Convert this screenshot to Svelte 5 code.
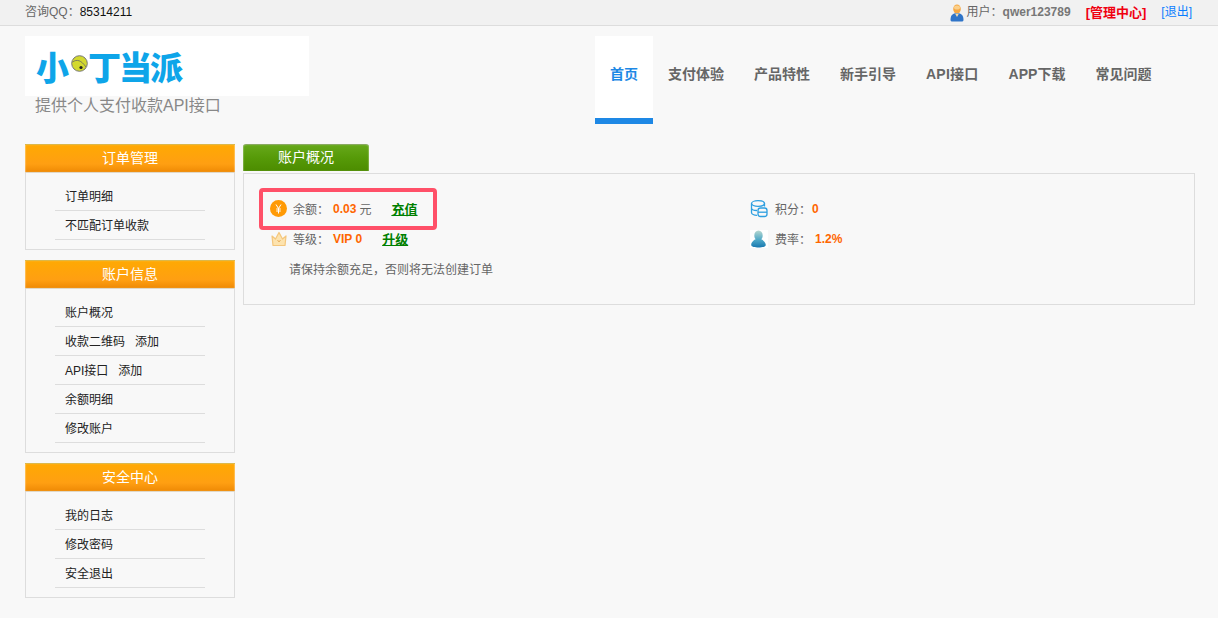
<script>
  const menus = [
    { title: '订单管理', items: [['订单明细'], ['不匹配订单收款']] },
    { title: '账户信息', items: [['账户概况'], ['收款二维码', '添加'], ['API接口', '添加'], ['余额明细'], ['修改账户']] },
    { title: '安全中心', items: [['我的日志'], ['修改密码'], ['安全退出']] }
  ];
  const nav = ['首页', '支付体验', '产品特性', '新手引导', 'API接口', 'APP下载', '常见问题'];
</script>

<div class="top">
  <div class="qq">咨询QQ：<b>85314211</b></div>
  <div class="user">
    <svg class="uicon" width="14" height="18" viewBox="0 0 14 18">
      <ellipse cx="7" cy="5" rx="3.800" ry="4.600" fill="#f5a742" />
      <ellipse cx="7" cy="3.600" rx="3" ry="2" fill="#fbd08a" />
      <path d="M0.500 16c0-5 2.500-7 6.500-7s6.500 2 6.500 7c0 1-1 1.600-2 1.600H2.500c-1 0-2-.6-2-1.600z" fill="#2f74c8" />
      <path d="M5 9.500h4L7 13z" fill="#f8dca8" />
    </svg>
    <span>用户：</span><b class="name">qwer123789</b>
    <b class="admin">[管理中心]</b>
    <span class="exit">[退出]</span>
  </div>
</div>

<header>
  <div class="brand">
    <div class="logo">
      <span class="g1">小</span>
      <svg width="17" height="17" viewBox="0 0 17 17" class="bell">
        <circle cx="8.500" cy="8.500" r="7.800" fill="#d3d92e" stroke="#777" stroke-width="1" />
        <path d="M1.500 7C6 4 10 5 15 12" fill="none" stroke="#666" stroke-width=".8" />
        <circle cx="10" cy="12.500" r="1.600" fill="#222" />
      </svg>
      <span class="g2">丁当</span><span class="g3">派</span>
    </div>
    <div class="slogan">提供个人支付收款API接口</div>
  </div>
  <nav>
    {#each nav as n, i}
      <div class="nav-item" class:active={i === 0} class:latin={i === 4}>{n}</div>
    {/each}
  </nav>
</header>

<div class="content">
  <aside>
    {#each menus as m}
      <section>
        <h3>{m.title}</h3>
        <ul>
          {#each m.items as it}
            <li>{it[0]}{#if it[1]}<span class="add">{it[1]}</span>{/if}</li>
          {/each}
        </ul>
      </section>
    {/each}
  </aside>
  <main>
    <div class="tab">账户概况</div>
    <div class="panel">
      <div class="mark"></div>
      <div class="grid">
        <div class="row">
          <svg class="ic" width="18" height="18" viewBox="0 0 18 18">
            <circle cx="8.500" cy="8.500" r="8.500" fill="#ff9a05" />
            <path d="M6 4.500l2.500 4 2.500-4M8.500 8.500v5M6.200 9h4.600M6.200 11h4.600" fill="none" stroke="#fff" stroke-width="1" />
          </svg>
          <span>余额：</span><b class="val">0.03</b><span class="unit">元</span><a href="#top" class="link">充值</a>
        </div>
        <div class="row right">
          <svg class="ic2" width="18" height="18" viewBox="0 0 18 18" fill="none" stroke="#2e9fe0" stroke-width="1.300">
            <ellipse cx="8" cy="3.500" rx="6.500" ry="2.800" />
            <path d="M1.500 3.500v9c0 1.500 2.500 2.800 5.500 2.800M14.500 3.500v3M1.500 8c0 1.500 2.500 2.500 5.500 2.500" />
            <rect x="8" y="8" width="9" height="8.500" rx="2.500" />
            <path d="M8 12.200h9" />
          </svg>
          <span>积分：</span><b class="val near">0</b>
        </div>
        <div class="row">
          <svg class="ic" width="18" height="18" viewBox="0 0 18 18">
            <path d="M2 6l3.500 3L9 2.500 12.500 9 16 6l-1 9.500H3z" fill="#fde3ae" stroke="#f4c67c" stroke-width="1.200" stroke-linejoin="round" />
            <path d="M7.500 10l1.500 2 1.500-2" fill="none" stroke="#e8b060" />
          </svg>
          <span>等级：</span><b class="val">VIP 0</b><a href="#top" class="link">升级</a>
        </div>
        <div class="row right">
          <svg class="ic2" width="18" height="18" viewBox="0 0 18 18">
            <defs><linearGradient id="u" x1="0" y1="0" x2="0" y2="1"><stop offset="0" stop-color="#b8d8d0" /><stop offset=".55" stop-color="#4fa9c8" /><stop offset="1" stop-color="#1878b0" /></linearGradient></defs>
            <rect width="18" height="18" fill="#fff" />
            <path d="M8.500 .5c2.600 0 4.200 2.200 4.200 5 0 1.800-.6 3-1.400 3.800 2 .8 4.500 3 4.500 5.700 0 1.800-3.800 2.500-7.300 2.500s-7.300-.7-7.300-2.500c0-2.700 2.500-4.900 4.500-5.700-.8-.8-1.400-2-1.400-3.800 0-2.800 1.600-5 4.200-5z" fill="url(#u)" />
          </svg>
          <span>费率：</span><b class="val">1.2%</b>
        </div>
        <div class="note">请保持余额充足，否则将无法创建订单</div>
      </div>
    </div>
  </main>
</div>

<style>
  :global(body) {
    margin: 0;
    background: #f8f8f8;
    font-family: "Liberation Sans", "Noto Sans CJK SC", sans-serif;
    font-size: 12px;
    color: #666;
  }
  .top {
    height: 25px;
    border-bottom: 1px solid #ddd;
    background: #f1f1f1;
    display: flex;
    justify-content: space-between;
    align-items: center;
    padding: 0 26px 0 25px;
    line-height: 25px;
  }
  .qq b { color: #111; font-weight: 400; }
  .user { display: flex; align-items: center; }
  .uicon { margin-right: 3px; }
  .name { color: #777; }
  .admin { color: #f00010; margin-left: 15px; font-size: 13px; }
  .exit { color: #0a7dff; margin-left: 15px; }
  header {
    display: flex;
    padding: 10px 0 0 25px;
    height: 88px;
  }
  .brand { width: 570px; }
  .logo {
    width: 284px;
    height: 60px;
    background: #fff;
    display: flex;
    align-items: center;
    padding-left: 11px;
    box-sizing: border-box;
    color: #0ea5e9;
    font-family: "Noto Sans CJK SC", sans-serif;
    font-weight: 900;
    font-size: 33px;
    line-height: 60px;
  }
  .g1 { margin-right: 2px; }
  .bell { flex: none; margin-bottom: 5px; }
  .g2 { width: 62px; letter-spacing: -2px; }
  .slogan {
    padding-left: 10px;
    font-size: 16px;
    line-height: 20px;
    color: #888;
  }
  nav { display: flex; height: 88px; }
  .nav-item {
    padding: 0 15px;
    font-size: 14px;
    font-weight: 700;
    line-height: 76px;
    height: 82px;
    color: #666;
    border-bottom: 6px solid transparent;
    white-space: nowrap;
  }
  .nav-item.latin { letter-spacing: .25px; }
  .nav-item.active {
    background: #fff;
    color: #1e88e5;
    border-bottom-color: #1e88e5;
  }
  .content {
    display: flex;
    align-items: flex-start;
    gap: 8px;
    padding: 20px 23px 0 25px;
  }
  aside { width: 210px; flex: none; }
  section {
    border: 1px solid #ddd;
    border-top: 0;
    margin-bottom: 10px;
  }
  h3 {
    margin: 0 -1px;
    height: 27px;
    line-height: 26px;
    text-align: center;
    font-size: 14px;
    font-weight: 400;
    color: #fff;
    border-top: 1px solid #dcb84a;
    background: linear-gradient(#ffa903, #ff9f12 70%, #ef8a05);
    border-bottom: 1px solid #e0d8c8;
    box-shadow: inset 1px 0 1px rgba(255, 255, 255, .3), inset -1px 0 1px rgba(255, 255, 255, .3);
  }
  ul {
    list-style: none;
    margin: 0;
    padding: 9px 29px 9px 29px;
  }
  li {
    height: 28px;
    line-height: 31px;
    border-bottom: 1px solid #ddd;
    padding-left: 10px;
    color: #222;
  }
  .add { margin-left: 10px; }
  main { flex: 1; min-width: 0; }
  .tab {
    width: 126px;
    height: 27px;
    line-height: 25px;
    margin-bottom: 2px;
    text-align: center;
    font-size: 14px;
    color: #fff;
    border-radius: 3px 3px 0 0;
    background: linear-gradient(#66a81a, #569a08 50%, #4c8c00);
    box-sizing: border-box;
    border-top: 1px solid #8aaa60;
    box-shadow: inset 1px 0 1px rgba(255, 255, 255, .25), inset -1px 0 1px rgba(255, 255, 255, .25);
  }
  .panel {
    position: relative;
    border: 1px solid #ddd;
    padding: 20px 26px 20px;
  }
  .mark {
    position: absolute;
    left: 15px;
    top: 14px;
    width: 178px;
    height: 42px;
    box-sizing: border-box;
    border: 4px solid #ff5068;
    border-radius: 4px;
  }
  .grid {
    display: grid;
    grid-template-columns: 480px 1fr;
    grid-auto-rows: 30px;
  }
  .row { display: flex; align-items: center; white-space: nowrap; }
  .row span, .row a { margin-bottom: 2px; }
  .ic { width: 18px; margin-right: 5px; flex: none; }
  .ic2 { width: 18px; margin-right: 7px; flex: none; }
  .val { color: #ff6600; margin-left: 4px; }
  .near { margin-left: 1px; }
  .unit { margin-left: 3px; }
  .link { color: #008000; font-weight: 700; font-size: 13px; margin-left: 20px; }
  .note { grid-column: 1 / -1; padding: 1px 0 0 19px; line-height: 30px; }
</style>
